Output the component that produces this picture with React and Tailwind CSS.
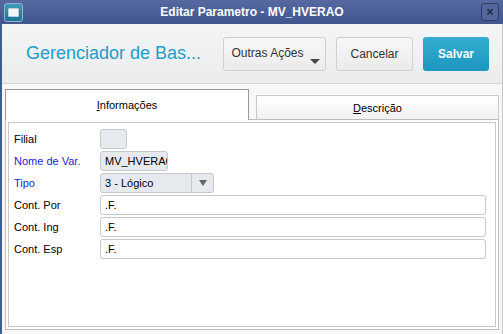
import React from 'react';

const font = { fontFamily: '"Liberation Sans", Arial, sans-serif' };

const Row = ({ label, blue, children }) => (
  <div className="flex items-center h-[22px]">
    <span className={`w-[86px] text-[11px] ${blue ? 'text-[#2323d8]' : 'text-black'}`}>{label}</span>
    {children}
  </div>
);

const TextBox = ({ value }) => (
  <div className="h-[20px] w-[386px] rounded-[3px] border border-[#c8c8c8] bg-white px-[4px] text-[11px] leading-[18px] text-black">
    {value}
  </div>
);

export default function App() {
  return (
    <div style={font} className="w-[503px] h-[334px] flex flex-col overflow-hidden bg-[#f4f4f4]">
      {/* title bar */}
      <div className="h-[24px] flex items-center px-[4px] bg-gradient-to-b from-[#5669a0] to-[#41558e]">
        <div className="w-[19px] h-[19px] rounded-[3px] border border-[#8fb4cc] bg-gradient-to-b from-[#3e9bbb] to-[#1d7399] flex items-center justify-center">
          <div className="w-[11px] h-[9px] bg-[#eef6fa] border border-[#bcd] rounded-[1px]" />
        </div>
        <div className="flex-1 text-center text-white text-[12px] font-bold">Editar Parametro - MV_HVERAO</div>
        <div className="w-[18px] h-[18px] rounded-[3px] border border-[#2e3d66] bg-[#53679c] flex items-center justify-center text-[#1c2540] text-[12px] font-bold leading-none">
          ×
        </div>
      </div>

      <div className="flex-1 flex flex-col border-l-2 border-l-[#2b62a8] border-r border-r-[#c8c8c8]">
        {/* header */}
        <div className="h-[60px] flex items-center bg-gradient-to-b from-[#f4f5f6] to-[#ebeced] border-b border-[#d4d4d4]">
          <div className="flex-1 pl-[24px] text-[18px] text-[#1d9ec9]">Gerenciador de Bas...</div>
          <div className="flex gap-[10px] pr-[13px]">
            <div className="relative w-[103px] h-[34px] rounded-[3px] border border-[#d0d0d0] bg-gradient-to-b from-[#f7f7f7] to-[#ebebeb] flex items-center justify-center text-[12px] text-[#333]">
              <span className="-mt-[2px] -ml-[14px]">Outras Ações</span>
              <div className="absolute right-[5px] bottom-[6px] w-0 h-0 border-l-[5px] border-r-[5px] border-t-[5px] border-l-transparent border-r-transparent border-t-[#444]" />
            </div>
            <div className="w-[77px] h-[34px] rounded-[3px] border border-[#d0d0d0] bg-gradient-to-b from-[#f7f7f7] to-[#ebebeb] flex items-center justify-center text-[12px] text-[#333]">
              Cancelar
            </div>
            <div className="w-[66px] h-[34px] rounded-[3px] bg-gradient-to-b from-[#35acd0] to-[#1c97c0] flex items-center justify-center text-[12px] font-bold text-white">
              Salvar
            </div>
          </div>
        </div>

        {/* tabs */}
        <div className="flex-1 flex flex-col px-[3px] pt-[5px] pb-[4px] bg-[#f7f7f7]">
          <div className="flex h-[31px] gap-[7px] text-[11px] text-black">
            <div className="w-[244px] h-[31px] border border-b-0 border-[#9a9a9a] bg-white flex items-center justify-center relative z-10">
              <span><span className="underline">I</span>nformações</span>
            </div>
            <div className="flex-1 mt-[6px] h-[25px] border border-b-0 border-[#c8c8c8] bg-gradient-to-b from-white to-[#f1f1f1] flex items-center justify-center">
              <span><span className="underline">D</span>escrição</span>
            </div>
          </div>
          <div className="flex-1 -mt-px border border-[#bdbdbd] p-[2px] bg-white">
            <div className="h-full border border-[#c9c9c9] bg-white pl-[5px] pt-[5px]">
              <Row label="Filial">
                <div className="w-[27px] h-[20px] rounded-[3px] border border-[#c8c8c8] bg-[#e6e9ee]" />
              </Row>
              <Row label="Nome de Var." blue>
                <div className="w-[68px] h-[20px] rounded-[3px] border border-[#c8c8c8] bg-[#e6e9ee] pl-[4px] pr-[2px] text-[11px] leading-[18px] overflow-hidden whitespace-nowrap">
                  MV_HVERAO
                </div>
              </Row>
              <Row label="Tipo" blue>
                <div className="w-[114px] h-[20px] rounded-[3px] border border-[#c8c8c8] bg-[#e6e9ee] flex text-[11px]">
                  <span className="flex-1 pl-[4px] leading-[18px]">3 - Lógico</span>
                  <div className="w-[22px] border-l border-[#c8c8c8] flex items-center justify-center">
                    <div className="w-0 h-0 border-l-[4px] border-r-[4px] border-t-[6px] border-l-transparent border-r-transparent border-t-[#666]" />
                  </div>
                </div>
              </Row>
              <Row label="Cont. Por"><TextBox value=".F." /></Row>
              <Row label="Cont. Ing"><TextBox value=".F." /></Row>
              <Row label="Cont. Esp"><TextBox value=".F." /></Row>
            </div>
          </div>
        </div>
      </div>
    </div>
  );
}
